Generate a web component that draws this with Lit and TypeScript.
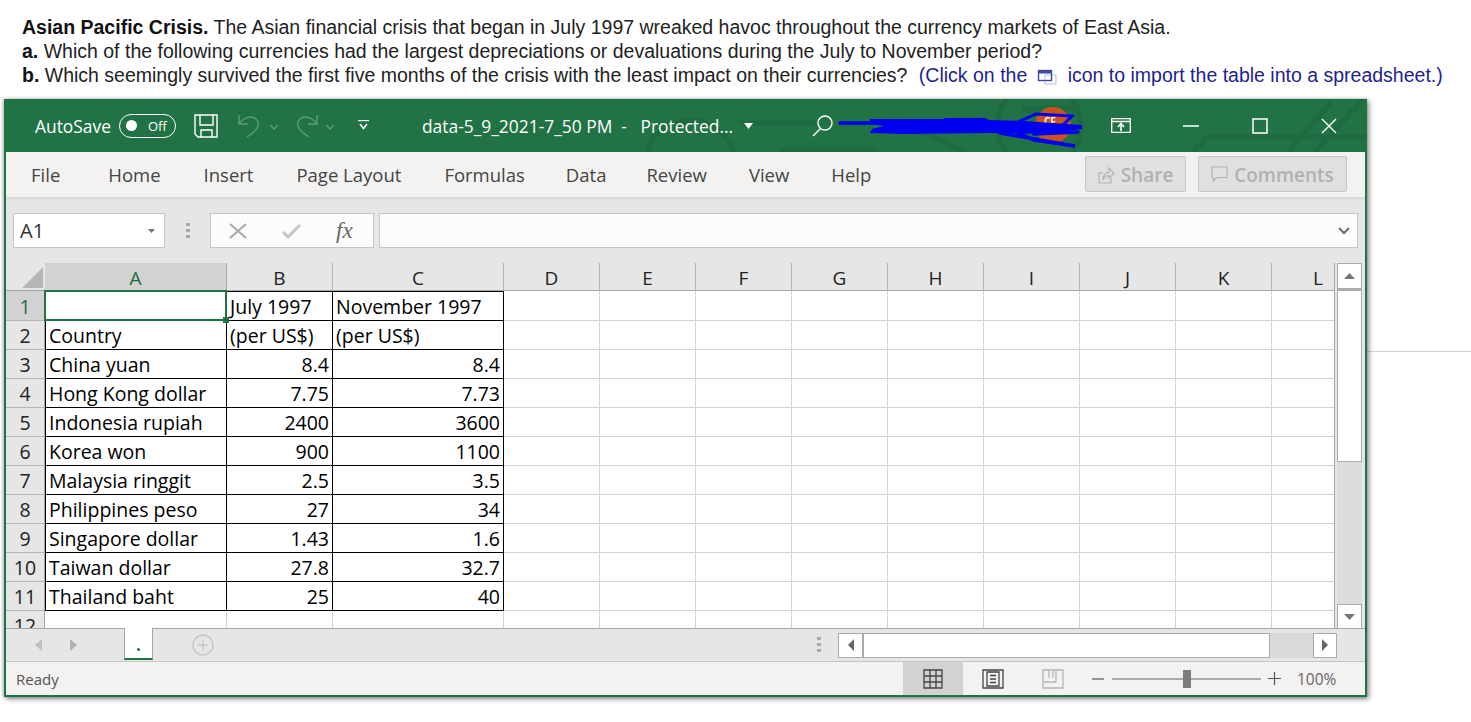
import { LitElement, html, css } from 'lit';
import { customElement } from 'lit/decorators.js';

const COLS = ['A', 'B', 'C', 'D', 'E', 'F', 'G', 'H', 'I', 'J', 'K', 'L'];
const ROWS: string[][] = [
  ['', 'July 1997', 'November 1997'],
  ['Country', '(per US$)', '(per US$)'],
  ['China yuan', '8.4', '8.4'],
  ['Hong Kong dollar', '7.75', '7.73'],
  ['Indonesia rupiah', '2400', '3600'],
  ['Korea won', '900', '1100'],
  ['Malaysia ringgit', '2.5', '3.5'],
  ['Philippines peso', '27', '34'],
  ['Singapore dollar', '1.43', '1.6'],
  ['Taiwan dollar', '27.8', '32.7'],
  ['Thailand baht', '25', '40'],
];
const TABS = ['File', 'Home', 'Insert', 'Page Layout', 'Formulas', 'Data', 'Review', 'View', 'Help'];

@customElement('app-root')
export class AppRoot extends LitElement {
  static styles = css`
    :host {
      display: block;
      position: relative;
      width: 1471px;
      height: 722px;
      overflow: hidden;
      background: #fff;
      font-family: 'Open Sans', sans-serif;
    }
    .question {
      padding: 15px 0 0 22px;
      height: 99px;
      box-sizing: border-box;
      font: 19.5px/24px 'Liberation Sans', Arial, sans-serif;
      color: #222;
      white-space: nowrap;
    }
    .question b { color: #111; }
    .hint { color: #1f1f8f; margin-left: 6px; }
    .hint svg { vertical-align: -3px; margin: 0 11px 0 4px; }
    .rule {
      position: absolute;
      left: 1367px;
      right: 0;
      top: 351px;
      height: 1px;
      background: #d0d0d8;
    }
    .window {
      position: relative;
      margin-left: 4px;
      width: 1363px;
      height: 598px;
      box-sizing: border-box;
      border: 2px solid #217346;
      border-top: 0;
      background: #e6e6e6;
      box-shadow: 2px 2px 5px rgba(0, 0, 0, 0.45), -1px 0 3px rgba(0, 0, 0, 0.25);
      display: flex;
      flex-direction: column;
    }
    .title {
      position: relative;
      height: 53px;
      background: #217346;
      color: #fff;
      display: flex;
      align-items: center;
      font-size: 17.4px;
      margin: 0 -2px;
      flex: none;
    }
    .title > * { position: relative; flex: none; }
    .title svg { display: block; }
    .title .art { position: absolute; left: 0; top: 0; }
    .autosave { margin-left: 31px; }
    .toggle {
      margin-left: 8px;
      width: 57px;
      height: 24px;
      box-sizing: border-box;
      border: 1.5px solid #fff;
      border-radius: 12px;
      display: flex;
      align-items: center;
      padding-left: 6px;
      gap: 11px;
      font-size: 13px;
    }
    .toggle i { width: 11px; height: 11px; border-radius: 50%; background: #fff; }
    .save { margin-left: 18px; }
    .undo { margin-left: 20px; }
    .redo { margin-left: 18px; }
    .more { margin-left: 24px; }
    .file { margin-left: 53px; width: 322px; white-space: pre; }
    .search { margin-left: 59px; }
    .ribbon { margin-left: 278px; }
    .min { margin-left: 52px; }
    .max { margin-left: 53px; }
    .close { margin-left: 53px; }
    .tabs {
      height: 45px;
      background: #f3f2f1;
      display: flex;
      align-items: center;
      color: #444;
      font-size: 18.5px;
      padding-left: 25px;
      gap: 43px;
      flex: none;
      position: relative;
    }
    .tabs > span:nth-child(1) { margin-right: 5px; }
    .tabs > span:nth-child(5) { margin-right: -2px; }
    .tabs > span:nth-child(6) { margin-right: -3px; }
    .tabs > span:nth-child(7) { margin-right: -1px; }
    .tabs > span:nth-child(8) { margin-right: -1px; }
    .actions {
      position: absolute;
      left: 1079px;
      top: 4px;
      display: flex;
      gap: 12px;
    }
    .action {
      height: 36px;
      box-sizing: border-box;
      border: 1px solid #c6c6c6;
      border-radius: 2px;
      background: #e1e0df;
      color: #b1b1b1;
      display: flex;
      align-items: center;
      justify-content: center;
      gap: 6px;
      padding-top: 1px;
      font-size: 19px;
      font-weight: 600;
    }
    .share { width: 101px; }
    .comments { width: 149px; }
    .fbar {
      height: 66px;
      flex: none;
      box-sizing: border-box;
      padding: 16px 7px 15px 7px;
      display: flex;
      align-items: stretch;
      background: linear-gradient(#d5d5d5, #e6e6e6 4px);
    }
    .box {
      background: #fff;
      border: 1px solid #c6c6c6;
      box-sizing: border-box;
      display: flex;
      align-items: center;
    }
    .name {
      width: 152px;
      padding: 0 9px 0 6px;
      justify-content: space-between;
      font-size: 20px;
      color: #333;
    }
    .dots { width: 45px; display: flex; align-items: center; justify-content: center; }
    .fx {
      width: 164px;
      margin-right: 5px;
      background: #fcfcfc;
      gap: 35px;
      padding-left: 18px;
    }
    .fx em {
      font: italic 23px 'Liberation Serif', serif;
      color: #666;
    }
    .input { flex: 1; justify-content: flex-end; padding-right: 7px; background: #fcfcfc; }
    .body { display: flex; height: 365px; flex: none; }
    .sheet {
      width: 1329px;
      height: 365px;
      overflow: hidden;
      position: relative;
      border-right: 1px solid #a6a6a6;
      box-sizing: border-box;
    }
    .grid {
      display: grid;
      grid-template-columns: 39px 182px 106px 171px 96px 96px 96px 96px 96px 96px 96px 96px 63px;
      grid-auto-rows: 29px;
      grid-template-rows: 28px 30px;
      font-size: 19.5px;
      color: #000;
      line-height: 30px;
    }
    .corner { position: relative; border-bottom: 1px solid #a6a6a6; }
    .corner::after {
      content: '';
      position: absolute;
      right: 2px;
      bottom: 2px;
      border-style: solid;
      border-width: 0 0 21px 21px;
      border-color: transparent transparent #b7b7b7 transparent;
    }
    .ch {
      text-align: center;
      font-size: 19px;
      line-height: 31px;
      overflow: hidden;
      box-sizing: border-box;
      border-right: 1px solid #b5b5b5;
      border-bottom: 1px solid #a6a6a6;
      color: #222;
    }
    .ch.last { text-align: right; padding-right: 11px; }
    .ch.on { background: #d2d2d2; color: #1f6b45; border-right-color: #a6a6a6; border-bottom-color: #217346; }
    .rh {
      text-align: center;
      font-size: 19.5px;
      overflow: hidden;
      box-sizing: border-box;
      border-bottom: 1px solid #b5b5b5;
      border-right: 1px solid #a6a6a6;
      color: #222;
    }
    .rh.on { background: #d2d2d2; color: #1f6b45; line-height: 32px; }
    .c {
      background: #fff;
      box-sizing: border-box;
      border-right: 1px solid #d4d4d4;
      border-bottom: 1px solid #d4d4d4;
      padding: 0 3px;
      white-space: nowrap;
      overflow: hidden;
    }
    .c.first { line-height: 32px; }
    .c.t { border-right-color: #000; border-bottom-color: #000; }
    .c.l { border-left: 1px solid #000; }
    .c.top { box-shadow: inset 0 1px 0 #000; }
    .c.r { text-align: right; }
    .sel {
      position: absolute;
      left: 38px;
      top: 27px;
      width: 183px;
      height: 31px;
      box-sizing: border-box;
      border: 2px solid #217346;
    }
    .sel::after {
      content: '';
      position: absolute;
      right: -4px;
      bottom: -4px;
      width: 6px;
      height: 6px;
      background: #217346;
    }
    .vscroll {
      margin-left: 2px;
      width: 25px;
      display: flex;
      flex-direction: column;
      background: #dcdcdc;
      height: 366px;
    }
    .sb {
      background: #fff;
      border: 1px solid #ababab;
      box-sizing: border-box;
      display: flex;
      align-items: center;
      justify-content: center;
      flex: none;
    }
    .vup { height: 26px; }
    .vthumb { height: 173px; border-top-width: 2px; }
    .vgap { flex: 1; }
    .vdown { height: 25px; }
    .tabbar {
      height: 34px;
      flex: none;
      box-sizing: border-box;
      border-top: 1px solid #a6a6a6;
      border-bottom: 1px solid #c6c6c6;
      display: flex;
      align-items: center;
      position: relative;
    }
    .nav { margin-left: 29px; display: flex; gap: 28px; }
    .sheet-tab {
      margin-left: 47px;
      align-self: flex-start;
      margin-top: -1px;
      width: 29px;
      height: 32px;
      box-sizing: border-box;
      background: #fff;
      border: 1px solid #a6a6a6;
      border-top: 0;
      border-bottom: 2px solid #217346;
      display: flex;
      justify-content: center;
      align-items: flex-end;
      padding-bottom: 7px;
    }
    .sheet-tab i { width: 3px; height: 3px; border-radius: 50%; background: #1b6b55; }
    .plus { margin-left: 39px; }
    .dots2 { margin-left: 603px; }
    .hscroll {
      margin-left: 17px;
      width: 499px;
      height: 25px;
      display: flex;
      background: #d9d9d9;
    }
    .hleft { width: 25px; }
    .hthumb { width: 407px; }
    .hgap { flex: 1; }
    .hright { width: 24px; }
    .status {
      height: 33px;
      flex: none;
      background: #f3f2f1;
      display: flex;
      align-items: center;
      color: #555;
      font-size: 15px;
      padding-left: 10px;
    }
    .ready { width: 887px; }
    .view { height: 33px; width: 60px; display: flex; align-items: center; justify-content: center; }
    .view.on { background: #d2d2d0; }
    .zminus { margin-left: 9px; }
    .zoom { margin-left: 8px; position: relative; width: 149px; height: 2px; background: #a9a9a9; }
    .zoom i { position: absolute; left: 71px; top: -8px; width: 8px; height: 18px; background: #7d7d7d; }
    .zplus { margin-left: 7px; }
    .pct { margin-left: 16px; color: #666; font-size: 15.5px; }
  `;

  renderArt() {
    return html`<svg class="art" width="1363" height="53" viewBox="0 0 1363 53" fill="none" stroke="#1f6a41" stroke-width="5">
      <path d="M 735 24 H 812"/>
      <circle cx="686" cy="66" r="45"/>
      <path d="M 890 20 L 975 60"/>
      <path d="M 776 51 H 870 L 880 60"/>
      <circle cx="1035" cy="27" r="42"/>
      <path d="M 1018 10 H 1075" stroke-width="7"/>
      <path d="M 1189 53 L 1204 38 H 1363"/>
      <path d="M 1284 53 L 1328 2"/>
      <path d="M 1311 53 L 1363 -4"/>
    </svg>`;
  }

  renderScribble() {
    return html`<svg class="art" width="1363" height="53" viewBox="0 0 1363 53" fill="none">
      <circle cx="1049" cy="26" r="18" fill="#c8541c"/>
      <text x="1040" y="26" font-size="10" font-weight="700" fill="#fff" font-family="Open Sans, sans-serif">CF</text>
      <path d="M 866 20 L 940 20 L 941 19 L 981 19 L 985 21 L 1020 22 L 1078 26 L 1078 30 L 1040 35 L 985 34 L 900 35 L 866 34 L 868 30 L 880 27 L 866 25 Z" fill="#0000f0"/>
      <g stroke="#0000f0" stroke-linecap="round" fill="none">
        <path d="M 836 24 H 880" stroke-width="3.5"/>
        <path d="M 1012 24 L 1032 15 L 1068 17 L 1058 27" stroke-width="3"/>
        <path d="M 996 34 L 1071 47 L 1030 41 L 1015 34" stroke-width="3.5"/>
        <path d="M 1030 35 L 1074 33" stroke-width="3.5"/>
      </g>
    </svg>`;
  }

  renderTitle() {
    return html`<div class="title">
      ${this.renderArt()}
      <span class="autosave">AutoSave</span>
      <span class="toggle"><i></i>Off</span>
      <svg class="save" width="24" height="24" viewBox="0 0 24 24" fill="none" stroke="#fff" stroke-width="1.4">
        <path d="M 1 1 H 23 V 23 H 4 L 1 20 Z M 6 1 V 11 H 19 V 1 M 7 23 V 16 H 18 V 23"/>
      </svg>
      <svg class="undo" width="40" height="24" viewBox="0 0 40 24" fill="none" stroke="#5f9a7a" stroke-width="1.4">
        <path d="M 1 1 V 10 H 10 M 1 10 C 6 3 14 1 18 5 C 23 10 20 16 9 23"/>
        <path d="M 32 11 L 36 15 L 40 11"/>
      </svg>
      <svg class="redo" width="38" height="24" viewBox="0 0 38 24" fill="none" stroke="#5f9a7a" stroke-width="1.4">
        <path d="M 21 1 V 10 H 12 M 21 10 C 16 3 8 1 4 5 C -1 10 2 16 13 23"/>
        <path d="M 30 11 L 34 15 L 38 11"/>
      </svg>
      <svg class="more" width="11" height="11" viewBox="0 0 11 11" fill="#fff" stroke="#fff">
        <path d="M 0 0.5 H 11" stroke-width="1.4"/><path d="M 2 4 L 5.5 8.5 L 9 4" fill="none" stroke-width="1.6"/>
      </svg>
      <span class="file">data-5_9_2021-7_50 PM  -   Protected...</span>
      <svg width="9" height="6" viewBox="0 0 9 6" fill="#fff"><path d="M 0 0 H 9 L 4.5 6 Z"/></svg>
      <svg class="search" width="21" height="22" viewBox="0 0 21 22" fill="none" stroke="#fff" stroke-width="1.4">
        <circle cx="13" cy="8" r="7"/><path d="M 8.5 13.5 L 1 21"/>
      </svg>
      ${this.renderScribble()}
      <svg class="ribbon" width="20" height="15" viewBox="0 0 20 15" fill="none" stroke="#fff" stroke-width="1.3">
        <path d="M 0.7 0.7 H 19.3 V 14.3 H 0.7 Z M 0.7 3.5 H 19.3"/><path d="M 10 13 V 6 M 7 9 L 10 5.5 L 13 9" stroke-width="1.6"/>
      </svg>
      <svg class="min" width="16" height="2" viewBox="0 0 16 2"><path d="M 0 1 H 16" stroke="#fff" stroke-width="1.5"/></svg>
      <svg class="max" width="16" height="16" viewBox="0 0 16 16" fill="none" stroke="#fff" stroke-width="1.5"><path d="M 1 1 H 15 V 15 H 1 Z"/></svg>
      <svg class="close" width="16" height="16" viewBox="0 0 16 16" fill="none" stroke="#fff" stroke-width="1.4"><path d="M 1 1 L 15 15 M 15 1 L 1 15"/></svg>
    </div>`;
  }

  renderRibbonTabs() {
    return html`<div class="tabs">
      ${TABS.map((t) => html`<span>${t}</span>`)}
      <div class="actions">
        <div class="action share">
          <svg width="17" height="18" viewBox="0 0 17 18" fill="none" stroke="#b1b1b1" stroke-width="1.2">
            <path d="M 5 7 H 1 V 17 H 13 V 12 M 5 14 C 5 9 8 6.5 11 6.5 V 2 L 16 7.5 L 11 12 V 9.5 C 9 9.5 6.5 11 5 14 Z"/>
          </svg>
          Share
        </div>
        <div class="action comments">
          <svg width="17" height="17" viewBox="0 0 17 17" fill="none" stroke="#b1b1b1" stroke-width="1.2">
            <path d="M 1 1 H 16 V 11.5 H 6 L 2.5 15 V 11.5 H 1 Z"/>
          </svg>
          Comments
        </div>
      </div>
    </div>`;
  }

  renderFormulaBar() {
    return html`<div class="fbar">
      <div class="box name">A1
        <svg width="7" height="4" viewBox="0 0 7 4" fill="#777"><path d="M 0 0 H 7 L 3.5 4 Z"/></svg>
      </div>
      <div class="dots">
        <svg width="4" height="16" viewBox="0 0 4 16" fill="#aaa"><rect y="0" width="4" height="3"/><rect y="6" width="4" height="3"/><rect y="12" width="4" height="3"/></svg>
      </div>
      <div class="box fx">
        <svg width="18" height="16" viewBox="0 0 18 16" fill="none" stroke="#a8a8a8" stroke-width="2"><path d="M 1 1 L 17 15 M 17 1 L 1 15"/></svg>
        <svg width="19" height="16" viewBox="0 0 19 16" fill="none" stroke="#c4c4c4" stroke-width="3"><path d="M 1 9 L 6 14 L 18 2"/></svg>
        <em>fx</em>
      </div>
      <div class="box input">
        <svg width="12" height="8" viewBox="0 0 12 8" fill="none" stroke="#777" stroke-width="2.4"><path d="M 1 1 L 6 6 L 11 1"/></svg>
      </div>
    </div>`;
  }

  renderCell(row: number, col: number) {
    const data = ROWS[row];
    const text = data ? data[col] ?? '' : '';
    const inTable = row < 11 && col < 3;
    const cls = ['c'];
    if (row === 0) cls.push('first');
    if (inTable) cls.push('t');
    if (inTable && col === 0 && row > 0) cls.push('l');
    if (row === 0 && col > 0 && col < 3) cls.push('top');
    if (inTable && row > 1 && col > 0) cls.push('r');
    return html`<div class="${cls.join(' ')}">${text}</div>`;
  }

  renderGrid() {
    return html`<div class="sheet">
      <div class="grid">
        <div class="corner"></div>
        ${COLS.map((c, i) => html`<div class="ch ${i === 0 ? 'on' : ''} ${i === 11 ? 'last' : ''}">${c}</div>`)}
        ${Array.from({ length: 12 }, (_, r) => html`
          <div class="rh ${r === 0 ? 'on' : ''}">${r + 1}</div>
          ${COLS.map((_c, c) => this.renderCell(r, c))}
        `)}
      </div>
      <div class="sel"></div>
    </div>`;
  }

  renderVScroll() {
    return html`<div class="vscroll">
      <div class="sb vup"><svg width="11" height="6" viewBox="0 0 11 6" fill="#777"><path d="M 0 6 L 5.5 0 L 11 6 Z"/></svg></div>
      <div class="sb vthumb"></div>
      <div class="vgap"></div>
      <div class="sb vdown"><svg width="11" height="6" viewBox="0 0 11 6" fill="#777"><path d="M 0 0 L 5.5 6 L 11 0 Z"/></svg></div>
    </div>`;
  }

  renderTabBar() {
    return html`<div class="tabbar">
      <div class="nav">
        <svg width="7" height="12" viewBox="0 0 7 12" fill="#c0c0c0"><path d="M 7 0 L 0 6 L 7 12 Z"/></svg>
        <svg width="7" height="12" viewBox="0 0 7 12" fill="#b0b0b0"><path d="M 0 0 L 7 6 L 0 12 Z"/></svg>
      </div>
      <div class="sheet-tab"><i></i></div>
      <svg class="plus" width="22" height="22" viewBox="0 0 22 22" fill="none" stroke="#c6c6c6" stroke-width="1.4">
        <circle cx="11" cy="11" r="10"/><path d="M 11 6 V 16 M 6 11 H 16"/>
      </svg>
      <svg class="dots2" width="4" height="16" viewBox="0 0 4 16" fill="#aaa"><rect y="0" width="4" height="3"/><rect y="6" width="4" height="3"/><rect y="12" width="4" height="3"/></svg>
      <div class="hscroll">
        <div class="sb hleft"><svg width="6" height="12" viewBox="0 0 6 12" fill="#666"><path d="M 6 0 L 0 6 L 6 12 Z"/></svg></div>
        <div class="sb hthumb"></div>
        <div class="hgap"></div>
        <div class="sb hright"><svg width="6" height="12" viewBox="0 0 6 12" fill="#666"><path d="M 0 0 L 6 6 L 0 12 Z"/></svg></div>
      </div>
    </div>`;
  }

  renderStatus() {
    return html`<div class="status">
      <span class="ready">Ready</span>
      <div class="view on">
        <svg width="20" height="20" viewBox="0 0 20 20" fill="none" stroke="#444" stroke-width="1.3"><path d="M 1 1 H 19 V 19 H 1 Z M 7 1 V 19 M 13 1 V 19 M 1 7 H 19 M 1 13 H 19"/></svg>
      </div>
      <div class="view">
        <svg width="22" height="20" viewBox="0 0 22 20" fill="none" stroke="#444" stroke-width="1.3"><path d="M 1 1 H 21 V 19 H 1 Z M 5 3 H 17 V 17 H 5 Z M 8 6.5 H 14 M 8 10 H 14 M 8 13.5 H 14"/></svg>
      </div>
      <div class="view">
        <svg width="22" height="20" viewBox="0 0 22 20" fill="none" stroke="#b5b5b5" stroke-width="1.3"><path d="M 1 1 H 21 V 19 H 1 Z M 2 13 H 14 V 1 M 7 1 V 9 M 11 1 V 9"/></svg>
      </div>
      <svg class="zminus" width="12" height="2" viewBox="0 0 12 2"><path d="M 0 1 H 12" stroke="#555" stroke-width="1.2"/></svg>
      <div class="zoom"><i></i></div>
      <svg class="zplus" width="13" height="13" viewBox="0 0 13 13"><path d="M 0 6.5 H 13 M 6.5 0 V 13" stroke="#555" stroke-width="1.2"/></svg>
      <span class="pct">100%</span>
    </div>`;
  }

  render() {
    return html`
      <div class="rule"></div>
      <div class="question">
        <b>Asian Pacific Crisis.</b> The Asian financial crisis that began in July 1997 wreaked havoc throughout the currency markets of East Asia.<br>
        <b>a.</b> Which of the following currencies had the largest depreciations or devaluations during the July to November period?<br>
        <b>b.</b> Which seemingly survived the first five months of the crisis with the least impact on their currencies?
        <span class="hint">(Click on the
          <svg width="20" height="16" viewBox="0 0 20 16" fill="none">
            <rect x="8" y="6" width="11" height="9" stroke="#b9bfe0"/>
            <rect x="1.5" y="1.5" width="13" height="10" stroke="#3f4a9f" stroke-width="1.4"/>
            <rect x="1" y="1" width="14" height="3.5" fill="#3f4a9f"/>
          </svg>icon to import the table into a spreadsheet.)</span>
      </div>
      <div class="window">
        ${this.renderTitle()}
        ${this.renderRibbonTabs()}
        ${this.renderFormulaBar()}
        <div class="body">
          ${this.renderGrid()}
          ${this.renderVScroll()}
        </div>
        ${this.renderTabBar()}
        ${this.renderStatus()}
      </div>
    `;
  }
}
